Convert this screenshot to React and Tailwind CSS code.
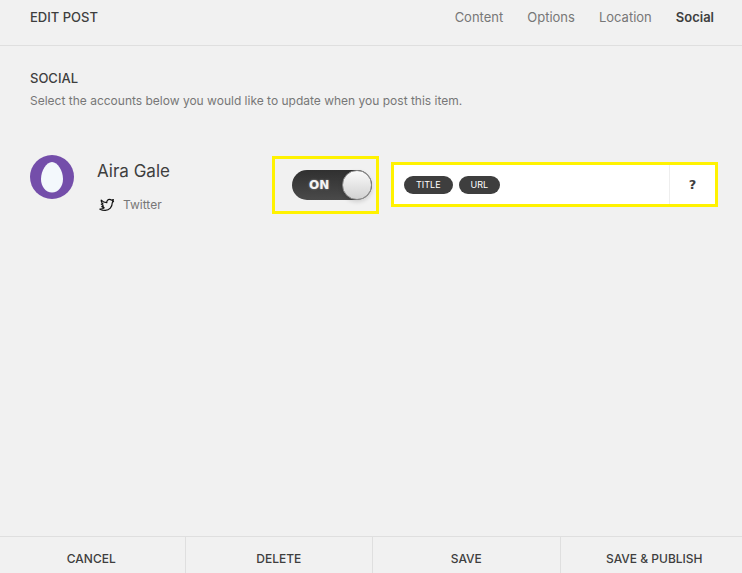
import { useState } from 'react';

const tabs = ['Content', 'Options', 'Location', 'Social'];
const actions = ['Cancel', 'Delete', 'Save', 'Save & Publish'];
const tokens = ['Title', 'URL'];

const EggAvatar = () => (
    <svg viewBox="0 0 44 44" className="w-11 h-11 shrink-0" aria-hidden="true">
        <circle cx="22" cy="22" r="22" fill="#744eaa" />
        <path d="M22 7c5.6 0 11 8.700 11 17 0 7.500-4.600 13.500-11 13.500S11 31.500 11 24C11 15.700 16.400 7 22 7z" fill="#f3f8fc" />
    </svg>
);

const TwitterIcon = () => (
    <svg
        viewBox="0 0 16 14"
        className="w-4 h-[14px] shrink-0"
        fill="none"
        stroke="#111111"
        strokeWidth="1.2"
        strokeLinejoin="round"
        strokeLinecap="round"
        aria-hidden="true"
    >
        <path d="M2.200 2.200C3.600 3.700 5.400 4.600 7.800 4.700 7.600 2.700 8.800 1.400 10.500 1.400c.8 0 1.400.3 1.900.8l2-.5-.8 1.500.9.2-1.200 1.200c0 4.300-2.900 7.700-7.100 7.700-1.900 0-3.600-.3-5.300-1.200 1.700.1 3.300-.3 4.300-1.200L2.800 8.600l1.700-.5-2.200-2 1.700-.1C2.500 4.900 2 3.700 2.200 2.200z" />
    </svg>
);

const Toggle = ({ checked, onChange }) => (
    <label className="relative block w-20 h-[30px] rounded-full bg-linear-to-b from-[#303030] to-[#4a4a4a] cursor-pointer">
        <input
            type="checkbox"
            role="switch"
            aria-label="Post to Twitter"
            checked={checked}
            onChange={(e) => onChange(e.target.checked)}
            className="peer sr-only"
        />
        <span className="absolute inset-y-0 left-[17px] flex items-center font-['DejaVu_Sans',sans-serif] text-xs font-bold text-[#f4f4f4] [text-shadow:0_0_2px_rgba(255,255,255,0.5)]">
            {checked ? 'ON' : 'OFF'}
        </span>
        <span className="absolute top-0 left-0 w-[30px] h-[30px] rounded-full border border-[#8a8a8a] bg-linear-to-b from-[#fafafa] to-[#d2d2d2] shadow-[0_2px_4px_rgba(0,0,0,0.15)] transition-transform peer-checked:translate-x-[50px]" />
    </label>
);

const App = () => {
    const [activeTab, setActiveTab] = useState('Social');
    const [enabled, setEnabled] = useState(true);

    return (
        <div className="min-h-screen flex flex-col overflow-hidden bg-[#f1f1f1] font-['Inter',sans-serif] text-[#3e3e3e]">
            {/* Header */}
            <header className="flex justify-between pl-[30px] pr-7 pt-[7px] pb-[18px] border-b border-[#dfdfdf] text-[13px] leading-5">
                <h1 className="font-medium">EDIT POST</h1>
                <nav className="flex gap-6">
                    {tabs.map((tab) => (
                        <a
                            key={tab}
                            href={`#${tab.toLowerCase()}`}
                            onClick={() => setActiveTab(tab)}
                            className={activeTab === tab ? 'font-semibold' : 'text-[#777777]'}
                        >
                            {tab}
                        </a>
                    ))}
                </nav>
            </header>

            <main className="flex-1 pl-[30px] pr-6 pt-[22px]">
                <h2 className="text-[13px] leading-5 font-medium">SOCIAL</h2>
                <p className="mt-[3px] text-xs leading-5 text-[#777777]">
                    Select the accounts below you would like to update when you post this item.
                </p>

                {/* Account */}
                <div className="mt-11 flex items-start">
                    <div className="w-[242px] shrink-0 flex gap-[23px]">
                        <EggAvatar />
                        <div className="pt-1">
                            <div className="text-[17px] leading-6">Aira Gale</div>
                            <div className="mt-3 flex items-center gap-2 pl-0.5 text-xs leading-5 text-[#777777]">
                                <TwitterIcon />
                                <span>Twitter</span>
                            </div>
                        </div>
                    </div>

                    <div className="mt-px shrink-0 border-3 border-[#fff200] pl-[17px] pr-1 pt-[11px] pb-[11px]">
                        <Toggle checked={enabled} onChange={setEnabled} />
                    </div>

                    <div className="mt-[7px] ml-3 flex-1 min-w-0 h-[45px] flex border-3 border-[#fff200] bg-white">
                        <div className="flex-1 min-w-0 flex items-center gap-[6px] pl-[10px]">
                            {tokens.map((token) => (
                                <span
                                    key={token}
                                    className="h-[18px] px-3 rounded-full bg-[#3e3e3e] text-[9px] leading-[18px] uppercase text-white"
                                >
                                    {token}
                                </span>
                            ))}
                            <input
                                type="text"
                                aria-label="Post message"
                                className="flex-1 min-w-0 text-xs outline-none"
                            />
                        </div>
                        <button
                            type="button"
                            aria-label="Help"
                            className="w-[46px] border-l border-[#eeeeee] font-['DejaVu_Sans',sans-serif] text-[13px] font-bold"
                        >
                            ?
                        </button>
                    </div>
                </div>
            </main>

            {/* Actions */}
            <footer className="-ml-0.5 -mr-1.5 grid grid-cols-4 border-t border-[#dfdfdf] divide-x divide-[#dfdfdf]">
                {actions.map((action) => (
                    <button
                        key={action}
                        type="button"
                        className="pt-[14px] pb-[6px] text-xs leading-4 font-medium uppercase"
                    >
                        {action}
                    </button>
                ))}
            </footer>
        </div>
    );
};

export default App;
